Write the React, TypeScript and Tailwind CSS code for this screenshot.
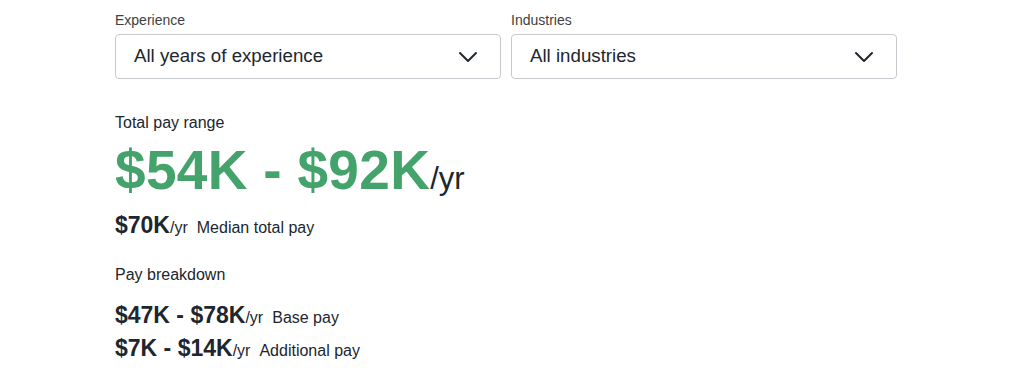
import React from 'react';

interface FilterProps {
  label: string;
  value: string;
}

const Chevron: React.FC = () => (
  <svg width="20" height="12" viewBox="0 0 20 12" fill="none" className="shrink-0">
    <path d="M2 2l8 8 8-8" stroke="#20262e" strokeWidth="2" strokeLinecap="round" strokeLinejoin="round" />
  </svg>
);

const Filter: React.FC<FilterProps> = ({ label, value }) => (
  <div className="flex-1">
    <div className="text-[14px] leading-[16px] text-[#3c3f44] mb-[6px]">{label}</div>
    <div className="h-[45px] flex items-center justify-between pl-[18px] pr-[22px] border border-[#c6c9ce] rounded-[4px] bg-white">
      <span className="text-[18.7px] text-[#20262e]">{value}</span>
      <Chevron />
    </div>
  </div>
);

interface PayLineProps {
  range: string;
  label: string;
}

const PayLine: React.FC<PayLineProps> = ({ range, label }) => (
  <div className="flex items-baseline h-[30px] leading-[30px] text-[#20262e]">
    <span className="text-[23px] font-bold">{range}</span>
    <span className="text-[16px]">/yr</span>
    <span className="text-[16px] ml-[9px]">{label}</span>
  </div>
);

export default function App() {
  return (
    <div className="w-[1024px] h-[379px] bg-white overflow-hidden font-['Liberation_Sans',Arial,sans-serif]">
      <div className="pl-[115px] pt-[12px] w-[897px]">
        {/* Фильтры */}
        <div className="flex gap-[10px]">
          <Filter label="Experience" value="All years of experience" />
          <Filter label="Industries" value="All industries" />
        </div>

        {/* Общий диапазон */}
        <div className="mt-[34px] text-[16px] leading-[20px] text-[#20262e]">Total pay range</div>
        <div className="mt-[9px] flex items-baseline h-[56px] leading-[56px]">
          <span className="text-[55px] font-bold text-[#44a36a] tracking-[0.3px]">$54K - $92K</span>
          <span className="text-[31px] text-[#20262e]">/yr</span>
        </div>
        <div className="mt-[12px]">
          <PayLine range="$70K" label="Median total pay" />
        </div>

        {/* Разбивка */}
        <div className="mt-[25px] text-[16px] leading-[20px] text-[#20262e]">Pay breakdown</div>
        <div className="mt-[15px] flex flex-col gap-[3px]">
          <PayLine range="$47K - $78K" label="Base pay" />
          <PayLine range="$7K - $14K" label="Additional pay" />
        </div>
      </div>
    </div>
  );
}
